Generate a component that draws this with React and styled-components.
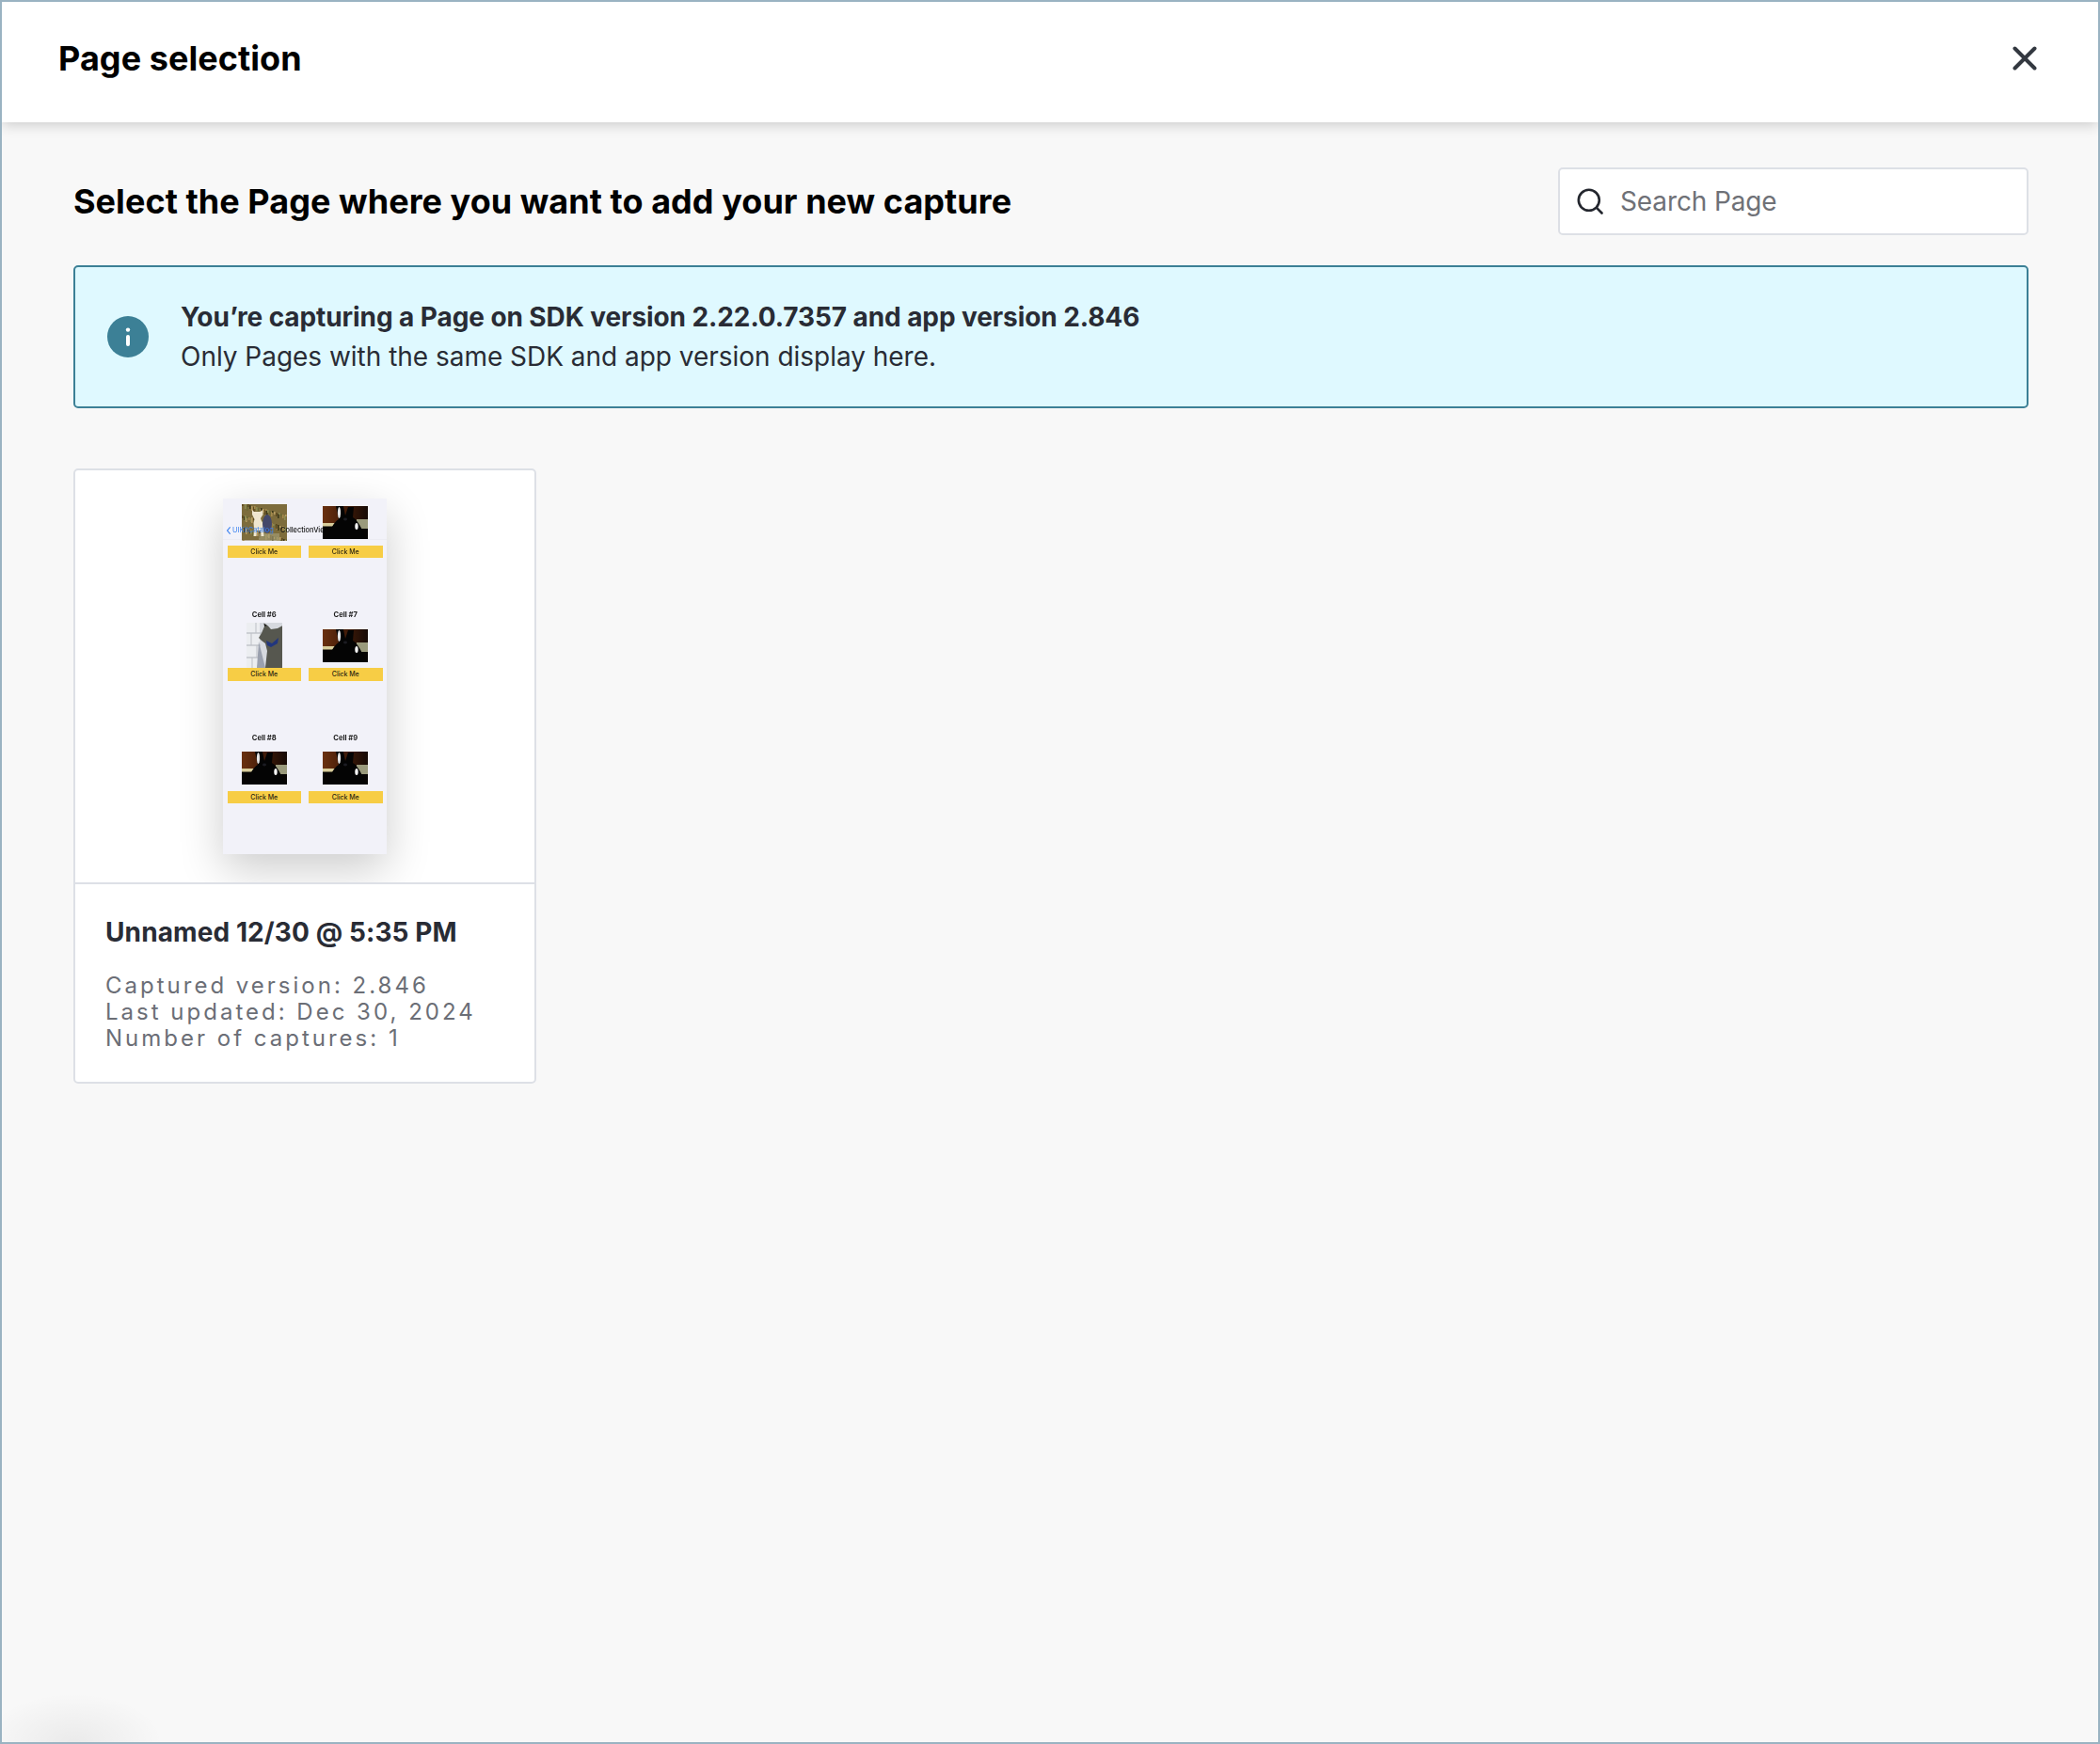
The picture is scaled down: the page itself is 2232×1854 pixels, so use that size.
import React from "react";
import styled, { createGlobalStyle } from "styled-components";

const Global = createGlobalStyle`
  html, body { margin: 0; padding: 0; }
  body { font-family: "Inter", "Liberation Sans", sans-serif; background: #f8f8f8; }
`;

const Frame = styled.div`
  box-sizing: border-box;
  width: 2232px;
  height: 1854px;
  border: 2px solid #9ab3c2;
  display: flex;
  flex-direction: column;
  overflow: hidden;
  background:
    radial-gradient(ellipse 95px 52px at 76px 100%, rgba(0, 0, 0, 0.055), rgba(0, 0, 0, 0) 100%),
    #f8f8f8;
`;

const Header = styled.header`
  flex: none;
  height: 128px;
  box-sizing: border-box;
  padding: 0 65px 8px 60px;
  display: flex;
  align-items: center;
  justify-content: space-between;
  background: #fff;
  box-shadow: 0 2px 14px rgba(0, 0, 0, 0.2);
  position: relative;
`;

const Title = styled.h1`
  margin: 0;
  font-size: 36px;
  line-height: 44px;
  font-weight: 700;
  letter-spacing: 0.05px;
  color: #000;
`;

const CloseButton = styled.button`
  border: 0;
  padding: 0;
  background: none;
  width: 26px;
  height: 26px;
  display: block;
  svg { display: block; }
`;

const Main = styled.main`
  flex: 1;
  padding: 48px 74px 0 76px;
`;

const TopRow = styled.div`
  display: flex;
  align-items: center;
  justify-content: space-between;
  height: 72px;
`;

const Heading = styled.h2`
  margin: 0;
  font-size: 36px;
  line-height: 44px;
  font-weight: 700;
  letter-spacing: 0.05px;
  color: #000;
`;

const SearchBox = styled.div`
  box-sizing: border-box;
  width: 500px;
  height: 72px;
  border: 2px solid #dde0e6;
  border-radius: 5px;
  background: #fff;
  display: flex;
  align-items: center;
  gap: 18px;
  padding-left: 18px;
`;

const SearchInput = styled.input`
  flex: 1;
  min-width: 0;
  border: 0;
  outline: 0;
  padding: 0;
  background: none;
  font-family: inherit;
  font-size: 28px;
  letter-spacing: -0.12px;
  color: #23262e;
  &::placeholder { color: #6f7177; opacity: 1; }
`;

const Alert = styled.section`
  box-sizing: border-box;
  margin-top: 32px;
  height: 152px;
  border: 2px solid #3c8096;
  border-radius: 5px;
  background: #dff9ff;
  display: flex;
  align-items: center;
  gap: 34px;
  padding-left: 34px;
`;

const InfoDisc = styled.span`
  flex: none;
  width: 44px;
  height: 44px;
  border-radius: 50%;
  background: #3c8096;
  display: flex;
  align-items: center;
  justify-content: center;
`;

const AlertText = styled.div`
  display: flex;
  flex-direction: column;
  font-size: 28px;
  line-height: 42px;
  letter-spacing: -0.025px;
  color: #292c35;
`;

const AlertStrong = styled.strong`
  font-weight: 700;
  letter-spacing: -0.09px;
`;

const Cards = styled.div`
  margin-top: 64px;
  display: grid;
  grid-template-columns: 492px;
`;

const Card = styled.article`
  box-sizing: border-box;
  height: 654px;
  border: 2px solid #dde0e6;
  border-radius: 5px;
  background: #fff;
  display: flex;
  flex-direction: column;
  overflow: hidden;
`;

const Preview = styled.div`
  flex: none;
  height: 440px;
  box-sizing: border-box;
  padding-top: 30px;
  display: flex;
  justify-content: center;
  border-bottom: 2px solid #dde0e6;
  overflow: hidden;
`;

const Screen = styled.div`
  width: 174px;
  height: 378px;
  position: relative;
  background: #f2f2f9;
  box-shadow: 0 16px 44px rgba(0, 0, 0, 0.2);
  overflow: hidden;
`;

const ScreenContent = styled.div`
  margin-top: -14.5px;
  padding: 0 4.5px;
  display: grid;
  grid-template-columns: 78.5px 78.5px;
  justify-content: space-between;
  grid-auto-rows: 130.5px;
`;

const Cell = styled.div`
  display: flex;
  flex-direction: column;
  align-items: center;
  filter: blur(0.4px);
  position: relative;
  z-index: ${(p) => (p.$raised ? 1 : "auto")};
`;

const CellLabel = styled.div`
  height: 16px;
  line-height: 16px;
  font-size: 7.6px;
  font-weight: 700;
  color: #1a1a1a;
`;

const PhotoSlot = styled.div`
  height: 48px;
  display: flex;
  align-items: center;
  justify-content: center;
`;

const PhotoFrame = styled.div`
  overflow: hidden;
  line-height: 0;
  svg { display: block; filter: blur(0.55px); }
`;

const MiniButton = styled.div`
  width: 78.5px;
  height: 13.7px;
  line-height: 13.7px;
  text-align: center;
  background: #f7cd45;
  font-size: 7px;
  font-weight: 500;
  color: #2a2410;
  position: relative;
`;

const NavBar = styled.div`
  position: absolute;
  top: 0;
  left: 0;
  right: 0;
  height: 43px;
  border-bottom: 1px solid rgba(0, 0, 0, 0.025);
  filter: blur(0.35px);
`;

const NavBack = styled.span`
  position: absolute;
  left: 4px;
  top: 28px;
  display: flex;
  align-items: center;
  gap: 2px;
  font-size: 7.4px;
  line-height: 12px;
  color: #3b82f0;
`;

const NavTitle = styled.span`
  position: absolute;
  left: 61px;
  top: 28px;
  white-space: nowrap;
  font-size: 7.4px;
  line-height: 12px;
  font-weight: 500;
  color: #111;
`;

const CardBody = styled.div`
  flex: 1;
  padding: 34px 32px 0 32px;
`;

const CardTitle = styled.h3`
  margin: 0;
  font-size: 28px;
  line-height: 34px;
  font-weight: 700;
  letter-spacing: 0.1px;
  color: #292c35;
`;

const Meta = styled.div`
  margin-top: 26px;
  font-size: 24px;
  line-height: 28px;
  letter-spacing: 3px;
  color: #6b6e76;
  white-space: nowrap;
`;

const Bunny = () => (
  <svg width="48" height="35" viewBox="0 0 48 35">
    <defs>
      <linearGradient id="bunnyWall" x1="0" y1="0" x2="1" y2="0">
        <stop offset="0" stopColor="#6a300f" />
        <stop offset="0.55" stopColor="#3f1a08" />
        <stop offset="1" stopColor="#160a05" />
      </linearGradient>
    </defs>
    <rect width="48" height="35" fill="#060403" />
    <rect width="48" height="19" fill="url(#bunnyWall)" />
    <rect x="0" y="18" width="14" height="3.5" fill="#d8cd9c" />
    <rect x="36" y="14" width="12" height="10" fill="#9a9a7c" />
    <path d="M5 35C8 24 12 17 17 14L14 0H22L24 10 27 1H33L32 12C37 15 41 22 46 35Z" fill="#040404" />
    <ellipse cx="17.5" cy="7" rx="1.6" ry="6" fill="#e6e6e6" />
    <ellipse cx="36" cy="21.5" rx="1.7" ry="3.6" fill="#f6f6f6" />
    <ellipse cx="24" cy="14" rx="2" ry="1.4" fill="#1c1c22" />
  </svg>
);

const grass = Array.from({ length: 90 }, (_, i) => ({
  x: (i * 37) % 48,
  y: (i * 23) % 39,
  h: 2 + (i * 7) % 5,
  c: ["#5d4a20", "#a48a4e", "#3f3a1c", "#8c8a52", "#b69a60", "#6c6a36"][i % 6],
}));

const Dog = () => (
  <svg width="48" height="38.5" viewBox="0 0 48 38.5">
    <rect width="48" height="38.5" fill="#7d6c3c" />
    {grass.map((g, i) => (
      <rect key={i} x={g.x} y={g.y} width="1.6" height={g.h} fill={g.c} />
    ))}
    <rect x="18" y="31" width="22" height="8" fill="#a9a27c" opacity="0.6" />
    <path d="M11 6l2 2h7l2-2 .5 5-2.5 4 1 3 2 3v6l.5 7h-3l-.5-6h-4l-.5 6h-3l.5-8-.5-6 1-4-2.5-5z" fill="#efe6cf" />
    <ellipse cx="27" cy="21" rx="5" ry="10" fill="#44486a" />
  </svg>
);

const Cat = () => (
  <svg width="38.5" height="48" viewBox="0 0 38.5 48">
    <rect width="38.5" height="48" fill="#d6d9df" />
    <rect width="14" height="48" fill="#eceef1" />
    <path d="M0 11h16M0 24h15M0 37h14" stroke="#aeb2b9" strokeWidth="1" />
    <path d="M10 0v11M5 11v13M11 24v13M6 37v11" stroke="#bdc0c6" strokeWidth="1" />
    <path d="M13 20l7 28h-9z" fill="#9aa0ae" />
    <path d="M13 16l3-5 3-7 4-.5 3 3.5 7-1 5.5-3V48H20l2-18-2-8-4-3z" fill="#56574f" />
    <path d="M19 4l-.5-3.5L23 3.500z" fill="#1f1f1b" />
    <path d="M21 19l6 3 7-6-1 6-7 4-4-2z" fill="#22367e" />
  </svg>
);

const Photo = ({ children }) => <PhotoFrame>{children}</PhotoFrame>;

const cells = [
  { photo: <Dog />, id: "a" },
  { photo: <Bunny />, id: "b", raised: true },
  { label: "Cell #6", photo: <Cat />, id: "c" },
  { label: "Cell #7", photo: <Bunny />, id: "d" },
  { label: "Cell #8", photo: <Bunny />, id: "e" },
  { label: "Cell #9", photo: <Bunny />, id: "f" },
];

export default function App() {
  return (
    <>
      <Global />
      <Frame>
        <Header>
          <Title>Page selection</Title>
          <CloseButton aria-label="Close">
            <svg width="26" height="26" viewBox="0 0 26 26" fill="none" stroke="#333840" strokeWidth="4" strokeLinecap="round">
              <path d="M2.5 2.5 23.5 23.5M23.5 2.5 2.5 23.5" />
            </svg>
          </CloseButton>
        </Header>
        <Main>
          <TopRow>
            <Heading>Select the Page where you want to add your new capture</Heading>
            <SearchBox>
              <svg width="28" height="28" viewBox="0 0 28 28" fill="none" stroke="#23262e" strokeWidth="2.6" strokeLinecap="round">
                <circle cx="12.8" cy="12.8" r="11" />
                <path d="M21.2 21.2 26.5 26.5" />
              </svg>
              <SearchInput placeholder="Search Page" readOnly />
            </SearchBox>
          </TopRow>
          <Alert>
            <InfoDisc>
              <svg width="6" height="20" viewBox="0 0 6 20" fill="#fff">
                <circle cx="3" cy="2.6" r="2.2" />
                <rect x="1" y="8" width="4" height="12" rx="2" />
              </svg>
            </InfoDisc>
            <AlertText>
              <AlertStrong>You’re capturing a Page on SDK version 2.22.0.7357 and app version 2.846</AlertStrong>
              <span>Only Pages with the same SDK and app version display here.</span>
            </AlertText>
          </Alert>
          <Cards>
            <Card>
              <Preview>
                <Screen>
                  <ScreenContent>
                    {cells.map((c) => (
                      <Cell key={c.id} $raised={c.raised}>
                        <CellLabel>{c.label}</CellLabel>
                        <PhotoSlot>
                          <Photo>{c.photo}</Photo>
                        </PhotoSlot>
                        <MiniButton>Click Me</MiniButton>
                      </Cell>
                    ))}
                  </ScreenContent>
                  <NavBar>
                    <NavBack>
                      <svg width="4" height="8" viewBox="0 0 4 8" fill="none" stroke="#3b82f0" strokeWidth="1.1" strokeLinecap="round">
                        <path d="M3.4.6.6 4l2.8 3.4" />
                      </svg>
                      UIKitCatalog
                    </NavBack>
                    <NavTitle>CollectionView</NavTitle>
                  </NavBar>
                </Screen>
              </Preview>
              <CardBody>
                <CardTitle>Unnamed 12/30 @ 5:35 PM</CardTitle>
                <Meta>
                  Captured version: 2.846
                  <br />
                  Last updated: Dec 30, 2024
                  <br />
                  Number of captures: 1
                </Meta>
              </CardBody>
            </Card>
          </Cards>
        </Main>
      </Frame>
    </>
  );
}
